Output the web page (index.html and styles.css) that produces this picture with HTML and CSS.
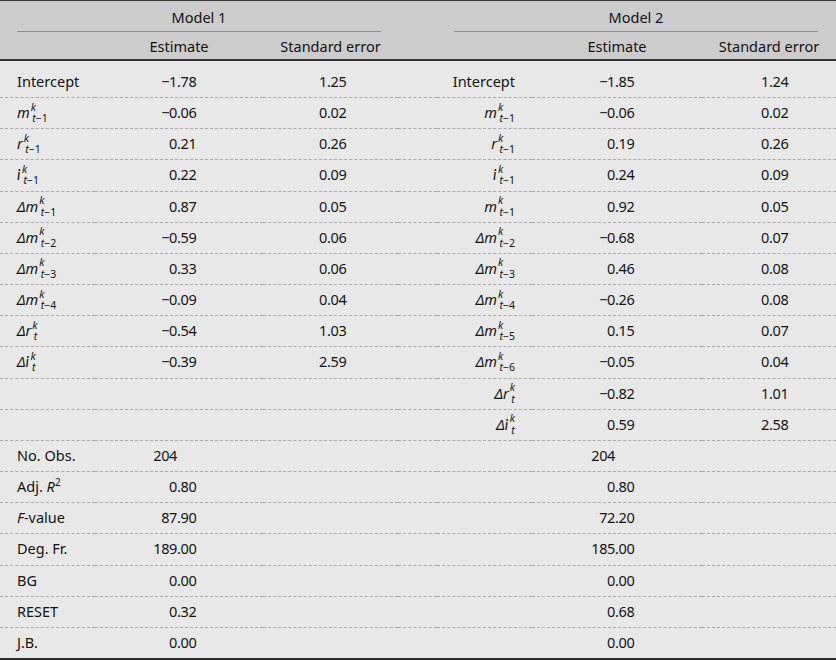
FILE: index.html
```html
<!DOCTYPE html>
<html>
<head>
<meta charset="utf-8">
<link rel="stylesheet" href="styles.css">
</head>
<body>
<table class="reg">
  <colgroup>
    <col class="w-lab"><col class="w-est"><col class="w-se"><col class="w-gap"><col class="w-lab"><col class="w-est2"><col class="w-se2">
  </colgroup>
  <thead>
    <tr class="h1">
      <th colspan="3" class="grp"><div class="grp-in">Model 1</div></th>
      <th></th>
      <th colspan="3" class="grp grp2"><div class="grp-in">Model 2</div></th>
    </tr>
    <tr class="h2">
      <th></th><th>Estimate</th><th>Standard error</th><th></th><th></th><th>Estimate</th><th>Standard error</th>
    </tr>
  </thead>
  <tbody>
    <tr class="first">
      <td class="lab">Intercept</td>
      <td class="n c2"><span class="i">−1</span><span class="f">.78</span></td>
      <td class="n c3"><span class="i">1</span><span class="f">.25</span></td>
      <td></td>
      <td class="lab r">Intercept</td>
      <td class="n c5"><span class="i">−1</span><span class="f">.85</span></td>
      <td class="n c6"><span class="i">1</span><span class="f">.24</span></td>
    </tr>
    <tr>
      <td class="lab"><i>m</i><span class="ss"><span class="sup"><i>k</i></span><span class="sub"><i>t</i>−1</span></span></td>
      <td class="n c2"><span class="i">−0</span><span class="f">.06</span></td>
      <td class="n c3"><span class="i">0</span><span class="f">.02</span></td>
      <td></td>
      <td class="lab r"><i>m</i><span class="ss"><span class="sup"><i>k</i></span><span class="sub"><i>t</i>−1</span></span></td>
      <td class="n c5"><span class="i">−0</span><span class="f">.06</span></td>
      <td class="n c6"><span class="i">0</span><span class="f">.02</span></td>
    </tr>
    <tr>
      <td class="lab"><i>r</i><span class="ss"><span class="sup"><i>k</i></span><span class="sub"><i>t</i>−1</span></span></td>
      <td class="n c2"><span class="i">0</span><span class="f">.21</span></td>
      <td class="n c3"><span class="i">0</span><span class="f">.26</span></td>
      <td></td>
      <td class="lab r"><i>r</i><span class="ss"><span class="sup"><i>k</i></span><span class="sub"><i>t</i>−1</span></span></td>
      <td class="n c5"><span class="i">0</span><span class="f">.19</span></td>
      <td class="n c6"><span class="i">0</span><span class="f">.26</span></td>
    </tr>
    <tr>
      <td class="lab"><i class="ii">i</i><span class="ss ss-i"><span class="sup"><i>k</i></span><span class="sub"><i>t</i>−1</span></span></td>
      <td class="n c2"><span class="i">0</span><span class="f">.22</span></td>
      <td class="n c3"><span class="i">0</span><span class="f">.09</span></td>
      <td></td>
      <td class="lab r"><i class="ii">i</i><span class="ss ss-i"><span class="sup"><i>k</i></span><span class="sub"><i>t</i>−1</span></span></td>
      <td class="n c5"><span class="i">0</span><span class="f">.24</span></td>
      <td class="n c6"><span class="i">0</span><span class="f">.09</span></td>
    </tr>
    <tr>
      <td class="lab"><i>Δm</i><span class="ss"><span class="sup"><i>k</i></span><span class="sub"><i>t</i>−1</span></span></td>
      <td class="n c2"><span class="i">0</span><span class="f">.87</span></td>
      <td class="n c3"><span class="i">0</span><span class="f">.05</span></td>
      <td></td>
      <td class="lab r"><i>m</i><span class="ss"><span class="sup"><i>k</i></span><span class="sub"><i>t</i>−1</span></span></td>
      <td class="n c5"><span class="i">0</span><span class="f">.92</span></td>
      <td class="n c6"><span class="i">0</span><span class="f">.05</span></td>
    </tr>
    <tr>
      <td class="lab"><i>Δm</i><span class="ss"><span class="sup"><i>k</i></span><span class="sub"><i>t</i>−2</span></span></td>
      <td class="n c2"><span class="i">−0</span><span class="f">.59</span></td>
      <td class="n c3"><span class="i">0</span><span class="f">.06</span></td>
      <td></td>
      <td class="lab r"><i>Δm</i><span class="ss"><span class="sup"><i>k</i></span><span class="sub"><i>t</i>−2</span></span></td>
      <td class="n c5"><span class="i">−0</span><span class="f">.68</span></td>
      <td class="n c6"><span class="i">0</span><span class="f">.07</span></td>
    </tr>
    <tr>
      <td class="lab"><i>Δm</i><span class="ss"><span class="sup"><i>k</i></span><span class="sub"><i>t</i>−3</span></span></td>
      <td class="n c2"><span class="i">0</span><span class="f">.33</span></td>
      <td class="n c3"><span class="i">0</span><span class="f">.06</span></td>
      <td></td>
      <td class="lab r"><i>Δm</i><span class="ss"><span class="sup"><i>k</i></span><span class="sub"><i>t</i>−3</span></span></td>
      <td class="n c5"><span class="i">0</span><span class="f">.46</span></td>
      <td class="n c6"><span class="i">0</span><span class="f">.08</span></td>
    </tr>
    <tr>
      <td class="lab"><i>Δm</i><span class="ss"><span class="sup"><i>k</i></span><span class="sub"><i>t</i>−4</span></span></td>
      <td class="n c2"><span class="i">−0</span><span class="f">.09</span></td>
      <td class="n c3"><span class="i">0</span><span class="f">.04</span></td>
      <td></td>
      <td class="lab r"><i>Δm</i><span class="ss"><span class="sup"><i>k</i></span><span class="sub"><i>t</i>−4</span></span></td>
      <td class="n c5"><span class="i">−0</span><span class="f">.26</span></td>
      <td class="n c6"><span class="i">0</span><span class="f">.08</span></td>
    </tr>
    <tr>
      <td class="lab"><i>Δr</i><span class="ss"><span class="sup"><i>k</i></span><span class="sub"><i>t</i></span></span></td>
      <td class="n c2"><span class="i">−0</span><span class="f">.54</span></td>
      <td class="n c3"><span class="i">1</span><span class="f">.03</span></td>
      <td></td>
      <td class="lab r"><i>Δm</i><span class="ss"><span class="sup"><i>k</i></span><span class="sub"><i>t</i>−5</span></span></td>
      <td class="n c5"><span class="i">0</span><span class="f">.15</span></td>
      <td class="n c6"><span class="i">0</span><span class="f">.07</span></td>
    </tr>
    <tr>
      <td class="lab"><i>Δ</i><i class="ii">i</i><span class="ss ss-i"><span class="sup"><i>k</i></span><span class="sub"><i>t</i></span></span></td>
      <td class="n c2"><span class="i">−0</span><span class="f">.39</span></td>
      <td class="n c3"><span class="i">2</span><span class="f">.59</span></td>
      <td></td>
      <td class="lab r"><i>Δm</i><span class="ss"><span class="sup"><i>k</i></span><span class="sub"><i>t</i>−6</span></span></td>
      <td class="n c5"><span class="i">−0</span><span class="f">.05</span></td>
      <td class="n c6"><span class="i">0</span><span class="f">.04</span></td>
    </tr>
    <tr>
      <td class="lab"></td><td></td><td></td><td></td>
      <td class="lab r"><i>Δr</i><span class="ss"><span class="sup"><i>k</i></span><span class="sub"><i>t</i></span></span></td>
      <td class="n c5"><span class="i">−0</span><span class="f">.82</span></td>
      <td class="n c6"><span class="i">1</span><span class="f">.01</span></td>
    </tr>
    <tr>
      <td class="lab"></td><td></td><td></td><td></td>
      <td class="lab r"><i>Δ</i><i class="ii">i</i><span class="ss ss-i"><span class="sup"><i>k</i></span><span class="sub"><i>t</i></span></span></td>
      <td class="n c5"><span class="i">0</span><span class="f">.59</span></td>
      <td class="n c6"><span class="i">2</span><span class="f">.58</span></td>
    </tr>
    <tr>
      <td class="lab">No. Obs.</td>
      <td class="n c2"><span class="i">204</span><span class="f"></span></td>
      <td></td><td></td><td class="lab r"></td>
      <td class="n c5"><span class="i">204</span><span class="f"></span></td>
      <td></td>
    </tr>
    <tr>
      <td class="lab">Adj. <i>R</i><span class="pw">2</span></td>
      <td class="n c2"><span class="i">0</span><span class="f">.80</span></td>
      <td></td><td></td><td class="lab r"></td>
      <td class="n c5"><span class="i">0</span><span class="f">.80</span></td>
      <td></td>
    </tr>
    <tr>
      <td class="lab"><i>F</i>-value</td>
      <td class="n c2"><span class="i">87</span><span class="f">.90</span></td>
      <td></td><td></td><td class="lab r"></td>
      <td class="n c5"><span class="i">72</span><span class="f">.20</span></td>
      <td></td>
    </tr>
    <tr>
      <td class="lab">Deg. Fr.</td>
      <td class="n c2"><span class="i">189</span><span class="f">.00</span></td>
      <td></td><td></td><td class="lab r"></td>
      <td class="n c5"><span class="i">185</span><span class="f">.00</span></td>
      <td></td>
    </tr>
    <tr>
      <td class="lab">BG</td>
      <td class="n c2"><span class="i">0</span><span class="f">.00</span></td>
      <td></td><td></td><td class="lab r"></td>
      <td class="n c5"><span class="i">0</span><span class="f">.00</span></td>
      <td></td>
    </tr>
    <tr>
      <td class="lab">RESET</td>
      <td class="n c2"><span class="i">0</span><span class="f">.32</span></td>
      <td></td><td></td><td class="lab r"></td>
      <td class="n c5"><span class="i">0</span><span class="f">.68</span></td>
      <td></td>
    </tr>
    <tr class="last">
      <td class="lab">J.B.</td>
      <td class="n c2"><span class="i">0</span><span class="f">.00</span></td>
      <td></td><td></td><td class="lab r"></td>
      <td class="n c5"><span class="i">0</span><span class="f">.00</span></td>
      <td></td>
    </tr>
  </tbody>
</table>
</body>
</html>
```
FILE: styles.css
```css
html, body {
  margin: 0;
  padding: 0;
  background: #e8e8e8;
}

.reg {
  width: 836px;
  table-layout: fixed;
  border-collapse: separate;
  border-spacing: 0;
  font-family: "Noto Sans", "Open Sans", sans-serif;
  font-size: 14.5px;
  color: #141414;
  background: #e8e8e8;
}

.w-lab { width: 95px; }
.w-est { width: 168px; }
.w-se { width: 135px; }
.w-gap { width: 39px; }
.w-est2 { width: 170px; }
.w-se2 { width: 134px; }

thead th {
  background: #cccccc;
  font-weight: normal;
  padding: 0;
  text-align: center;
}

.h1 th {
  border-top: 1px solid #3a3a3a;
  padding-top: 6px;
}

.grp {
  padding-left: 17px;
  padding-right: 17px;
}

.grp2 {
  padding-right: 18px;
}

.grp-in {
  line-height: 20px;
  padding-bottom: 4px;
  border-bottom: 1px solid #8e8e8e;
}

.h2 th {
  line-height: 20px;
  padding-top: 4px;
  padding-bottom: 3px;
  border-bottom: 2px solid #333333;
}

tbody td {
  padding: 6px 0 7.17px 0;
  line-height: 17px;
  border-bottom: 1px dashed #aaaaaa;
  white-space: nowrap;
}

tbody tr.first td {
  padding-top: 12px;
}

tbody tr.last td {
  border-bottom: 2px solid #2e2e2e;
}

.lab {
  padding-left: 17px;
  text-align: left;
}

.lab.r {
  padding-left: 0;
  padding-right: 17px;
  text-align: right;
}

.n {
  letter-spacing: -0.4px;
}

.n .i {
  display: inline-block;
  text-align: right;
}

.n .f {
  display: inline-block;
  text-align: left;
}

.c2 .i { width: 82px; }
.c3 .i { width: 64px; }
.c5 .i { width: 83px; }
.c6 .i { width: 67px; }

.ii {
  font-family: "Lato", "Noto Sans", sans-serif;
  font-size: 15px;
}

.ss {
  display: inline-block;
  vertical-align: -4px;
  font-size: 10.5px;
  line-height: 11.5px;
  margin: -5px 0 -4px 1px;
  text-align: left;
}

.ss.ss-i {
  margin-left: 1.5px;
}

.ss .sup,
.ss .sub {
  display: block;
}

.ss .sub {
  padding-left: 1.5px;
}

.pw {
  font-size: 10px;
  vertical-align: 6px;
  line-height: 0;
}
```
